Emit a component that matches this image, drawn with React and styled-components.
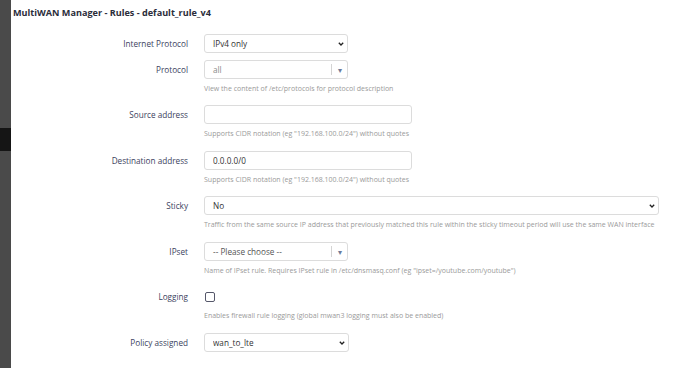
import React from 'react'
import styled, { createGlobalStyle } from 'styled-components'

const GlobalStyle = createGlobalStyle`
  html, body {
    margin: 0;
    padding: 0;
    background: #ffffff;
  }
  body {
    font-family: 'Open Sans', 'Noto Sans', sans-serif;
  }
`

const fields = [
  { label: 'Internet Protocol', kind: 'select', value: 'IPv4 only', width: 144 },
  {
    label: 'Protocol',
    kind: 'dropdown',
    value: 'all',
    muted: true,
    help: 'View the content of /etc/protocols for protocol description',
  },
  {
    label: 'Source address',
    kind: 'input',
    value: '',
    help: 'Supports CIDR notation (eg "192.168.100.0/24") without quotes',
  },
  {
    label: 'Destination address',
    kind: 'input',
    value: '0.0.0.0/0',
    help: 'Supports CIDR notation (eg "192.168.100.0/24") without quotes',
  },
  {
    label: 'Sticky',
    kind: 'select',
    value: 'No',
    width: 455,
    help: 'Traffic from the same source IP address that previously matched this rule within the sticky timeout period will use the same WAN interface',
  },
  {
    label: 'IPset',
    kind: 'dropdown',
    value: '-- Please choose --',
    help: 'Name of IPset rule. Requires IPset rule in /etc/dnsmasq.conf (eg "ipset=/youtube.com/youtube")',
  },
  {
    label: 'Logging',
    kind: 'checkbox',
    help: 'Enables firewall rule logging (global mwan3 logging must also be enabled)',
  },
  { label: 'Policy assigned', kind: 'select', value: 'wan_to_lte', width: 145 },
]

const Chevron = () => (
  <svg width='6' height='4' viewBox='0 0 6 4'>
    <path d='M0.8 0.8 L3 3 L5.2 0.8' fill='none' stroke='#222' strokeWidth='1.3' />
  </svg>
)

const Control = ({ field }) => {
  const { kind, value, width, muted } = field
  if (kind === 'select') {
    return (
      <SelectWrap $width={width}>
        <Select defaultValue={value}>
          <option>{value}</option>
        </Select>
        <span className='arrow'>
          <Chevron />
        </span>
      </SelectWrap>
    )
  }
  if (kind === 'dropdown') {
    return (
      <Dropdown>
        <DropdownValue $muted={muted}>{value}</DropdownValue>
        <DropdownToggle>▾</DropdownToggle>
      </Dropdown>
    )
  }
  if (kind === 'input') {
    return <Input type='text' defaultValue={value} />
  }
  return (
    <CheckRow>
      <Checkbox type='checkbox' />
    </CheckRow>
  )
}

const App = () => {
  return (
    <>
      <GlobalStyle />
      <Page>
        <Backdrop>
          <span className='shade' />
        </Backdrop>
        <Modal>
          <Title>MultiWAN Manager - Rules - default_rule_v4</Title>
          <Form>
            {fields.map((field) => (
              <Row key={field.label}>
                <Label>{field.label}</Label>
                <Value>
                  <Control field={field} />
                  {field.help && <Help>{field.help}</Help>}
                </Value>
              </Row>
            ))}
          </Form>
        </Modal>
      </Page>
    </>
  )
}

const Page = styled.div`
  display: flex;
  width: 690px;
  height: 368px;
  overflow: hidden;
`

const Backdrop = styled.div`
  width: 11px;
  flex-shrink: 0;
  background: #4a4a4a;
  display: flex;
  flex-direction: column;
  padding-top: 128px;
  box-sizing: border-box;
  .shade {
    display: block;
    height: 23px;
    background: #151515;
  }
`

const Modal = styled.div`
  flex: 1;
  background: #ffffff;
  padding: 6px 0 0 2px;
  border-top-left-radius: 3px;
`

const Title = styled.h3`
  margin: 0;
  font-size: 9.1px;
  line-height: 14px;
  font-weight: 700;
  color: #2b2d3a;
`

const Form = styled.div`
  display: flex;
  flex-direction: column;
  gap: 7px;
  margin-top: 13.5px;
`

const Row = styled.div`
  display: grid;
  grid-template-columns: 175px 1fr;
  column-gap: 16px;
  align-items: start;
`

const Label = styled.div`
  text-align: right;
  font-size: 8.2px;
  line-height: 19px;
  color: #3c3f5e;
`

const Value = styled.div`
  display: flex;
  flex-direction: column;
  align-items: flex-start;
`

const fieldBox = `
  box-sizing: border-box;
  height: 19px;
  border: 1px solid #dcdcdc;
  border-radius: 3px;
  background: #ffffff;
  font-family: 'Open Sans', 'Noto Sans', sans-serif;
  font-size: 8.2px;
  color: #333333;
`

const SelectWrap = styled.div`
  position: relative;
  display: flex;
  width: ${(p) => p.$width}px;
  height: 19px;
  .arrow {
    position: absolute;
    right: 4px;
    top: 8px;
    display: flex;
    pointer-events: none;
  }
`

const Select = styled.select`
  ${fieldBox}
  display: block;
  appearance: none;
  width: 100%;
  margin: 0;
  padding: 0 14px 0 8px;
  outline: none;
`

const Input = styled.input`
  ${fieldBox}
  width: 208px;
  margin: 0;
  padding: 0 8px;
  outline: none;
`

const Dropdown = styled.div`
  ${fieldBox}
  width: 144px;
  display: flex;
  align-items: center;
  padding: 0 0 0 8px;
`

const DropdownValue = styled.span`
  flex: 1;
  color: ${(p) => (p.$muted ? '#8a8a8a' : '#555555')};
`

const DropdownToggle = styled.span`
  width: 15px;
  height: 11px;
  border-left: 1px solid #d4d4d4;
  display: flex;
  align-items: center;
  justify-content: center;
  font-size: 8px;
  color: #6c7a99;
`

const CheckRow = styled.div`
  height: 19px;
  display: flex;
  align-items: center;
`

const Checkbox = styled.input`
  appearance: none;
  box-sizing: border-box;
  width: 10px;
  height: 10px;
  margin: 0 0 0 1px;
  border: 1px solid #55576a;
  border-radius: 2px;
  background: #ffffff;
`

const Help = styled.div`
  margin: 4px 0 4.5px;
  font-size: 7px;
  line-height: 11px;
  color: #9a9a9a;
  white-space: nowrap;
`

export default App
